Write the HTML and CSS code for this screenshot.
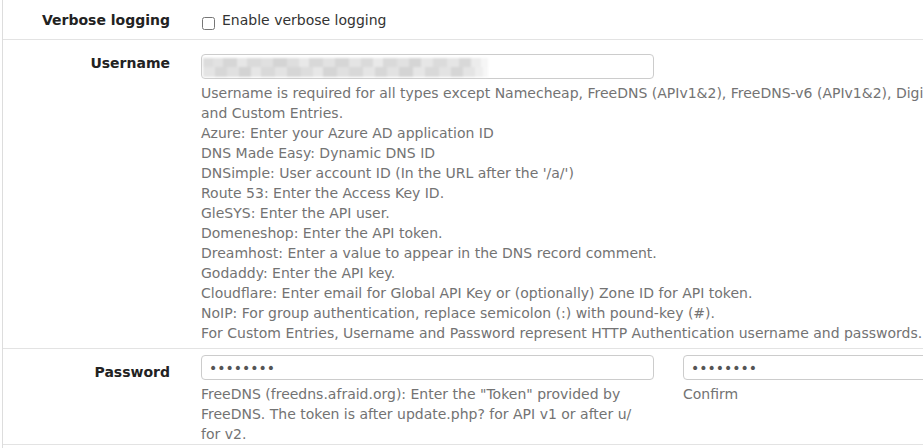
FILE: index.html
```html
<!DOCTYPE html>
<html>
<head>
<meta charset="utf-8">
<link rel="stylesheet" href="styles.css">
</head>
<body>
<div class="panel">
  <div class="row row-verbose">
    <div class="label">Verbose logging</div>
    <div class="field">
      <label class="check"><input type="checkbox" class="cb"> Enable verbose logging</label>
    </div>
  </div>
  <div class="row row-user">
    <div class="label">Username</div>
    <div class="field">
      <div class="input"><span class="mosaic"></span></div>
      <div class="help">Username is required for all types except Namecheap, FreeDNS (APIv1&amp;2), FreeDNS-v6 (APIv1&amp;2), DigitalOcean, Linode<br>and Custom Entries.<br>Azure: Enter your Azure AD application ID<br>DNS Made Easy: Dynamic DNS ID<br>DNSimple: User account ID (In the URL after the '/a/')<br>Route 53: Enter the Access Key ID.<br>GleSYS: Enter the API user.<br>Domeneshop: Enter the API token.<br>Dreamhost: Enter a value to appear in the DNS record comment.<br>Godaddy: Enter the API key.<br>Cloudflare: Enter email for Global API Key or (optionally) Zone ID for API token.<br>NoIP: For group authentication, replace semicolon (:) with pound-key (#).<br>For Custom Entries, Username and Password represent HTTP Authentication username and passwords.</div>
    </div>
  </div>
  <div class="row row-pass">
    <div class="label">Password</div>
    <div class="field">
      <div class="input dots">••••••••</div>
      <div class="help">FreeDNS (freedns.afraid.org): Enter the "Token" provided by<br>FreeDNS. The token is after update.php? for API v1 or after u/<br>for v2.</div>
    </div>
    <div class="field field2">
      <div class="input dots">••••••••</div>
      <div class="help">Confirm</div>
    </div>
  </div>
</div>
</body>
</html>
```
FILE: styles.css
```css
html, body {
  margin: 0;
  padding: 0;
  background: #fff;
  overflow: hidden;
}
body {
  font-family: "DejaVu Sans", sans-serif;
  font-size: 14px;
  line-height: 20px;
  color: #333;
  width: 923px;
  height: 448px;
}
.panel {
  margin-left: 2px;
  border-left: 1px solid #dddddd;
  height: 448px;
  width: 1400px;
}
.row {
  display: flex;
  border-bottom: 1px solid #e3e3e3;
}
.label {
  width: 182px;
  flex: none;
  box-sizing: border-box;
  padding-right: 15px;
  text-align: right;
  font-weight: bold;
  color: #222;
  padding-top: 13px;
}
.field {
  padding-left: 16px;
  width: 453px;
  flex: none;
}
.field2 {
  padding-left: 29px;
}
.row-verbose {
  height: 39px;
}
.row-verbose .label {
  padding-top: 10px;
}
.row-verbose .field {
  padding-top: 10px;
  width: 600px;
}
.check {
  display: flex;
  align-items: center;
  white-space: nowrap;
  color: #333;
}
.cb {
  margin: 0 7px 0 1px;
  width: 13px;
  height: 13px;
  position: relative;
  top: 3px;
}
.row-user {
  height: 309px;
  box-sizing: border-box;
}
.row-user .field {
  padding-top: 14px;
}
.row-pass .field {
  padding-top: 6px;
}
.input {
  box-sizing: border-box;
  width: 453px;
  height: 25px;
  border: 1px solid #cccccc;
  border-radius: 4px;
  background: #fff;
  padding: 1px 7px 0 7px;
  line-height: 21px;
  display: flex;
  align-items: center;
}
.field2 .input {
  width: 470px;
}
.dots {
  color: #555;
  letter-spacing: 0px;
  font-size: 14px;
}
.mosaic {
  display: block;
  width: 285px;
  height: 19px;
  margin-left: -6px;
  filter: blur(1px);
  background:
    linear-gradient(90deg,
      #dcdcdc 0 10px, #e2e2e2 10px 20px, #d6d6d6 20px 34px, #e6e6e6 34px 44px,
      #dadada 44px 58px, #e0e0e0 58px 70px, #d4d4d4 70px 84px, #dedede 84px 96px,
      #e8e8e8 96px 106px, #d8d8d8 106px 120px, #e2e2e2 120px 132px, #d6d6d6 132px 146px,
      #e4e4e4 146px 158px, #dadada 158px 170px, #e9e9e9 170px 180px, #d9d9d9 180px 194px,
      #e1e1e1 194px 206px, #d5d5d5 206px 218px, #e6e6e6 218px 230px, #dbdbdb 230px 244px,
      #e5e5e5 244px 256px, #d8d8d8 256px 268px, #ececec 268px 278px, #f6f6f6 278px 285px) top / 100% 9px no-repeat,
    linear-gradient(90deg,
      #e4e4e4 0 12px, #d7d7d7 12px 24px, #e0e0e0 24px 36px, #d3d3d3 36px 48px,
      #e6e6e6 48px 58px, #d9d9d9 58px 72px, #e3e3e3 72px 84px, #d6d6d6 84px 98px,
      #dddddd 98px 110px, #e7e7e7 110px 120px, #d5d5d5 120px 134px, #e0e0e0 134px 146px,
      #d8d8d8 146px 160px, #e5e5e5 160px 172px, #d7d7d7 172px 184px, #e2e2e2 184px 196px,
      #d4d4d4 196px 210px, #e6e6e6 210px 222px, #d9d9d9 222px 236px, #e3e3e3 236px 248px,
      #d6d6d6 248px 260px, #e4e4e4 260px 272px, #eeeeee 272px 280px, #f7f7f7 280px 285px) bottom / 100% 10px no-repeat;
}
.help {
  margin-top: 4px;
  color: #737373;
  white-space: nowrap;
}
```
